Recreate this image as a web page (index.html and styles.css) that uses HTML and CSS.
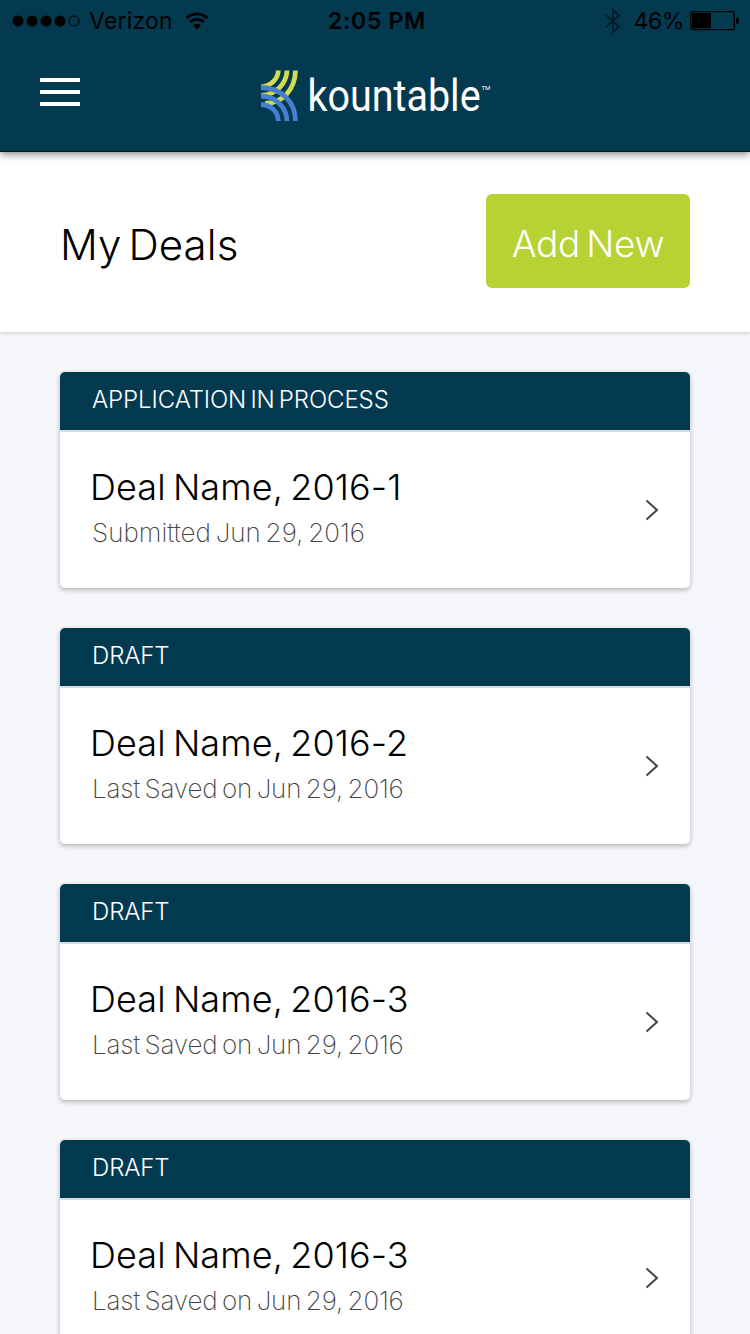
FILE: index.html
```html
<!DOCTYPE html>
<html lang="en">

<head>
	<meta charset="UTF-8">
	<meta name="viewport" content="width=device-width, initial-scale=1.0">

	<title>My Deals</title>

	<link rel="stylesheet" href="styles.css">
</head>

<body>
	<header class="header">
		<div class="status-bar">
			<div class="status-left">
				<svg class="signal" width="68" height="12" viewBox="0 0 68 12">
					<circle cx="6" cy="6" r="5.5" />
					<circle cx="20" cy="6" r="5.5" />
					<circle cx="34" cy="6" r="5.5" />
					<circle cx="48" cy="6" r="5.5" />
					<circle cx="62" cy="6" r="5" fill="none" stroke="#000" stroke-width="1" />
				</svg>
				<span class="carrier">Verizon</span>
				<svg class="wifi" width="24" height="18" viewBox="0 0 24 18">
					<path d="M1.5 6a15.3 15.3 0 0 1 21 0M5.2 10.2a9.8 9.8 0 0 1 13.6 0" fill="none" stroke="#000" stroke-width="2.8" />
					<path d="M8 13.4a5.8 5.8 0 0 1 8 0L12 17.6z" />
				</svg>
			</div>
			<span class="time">2:05 PM</span>
			<div class="status-right">
				<svg class="bluetooth" width="16" height="26" viewBox="0 0 16 26">
					<path d="M1 7l13 11.5-6 5.5V2l6 5.5L1 19" fill="none" stroke="#000" stroke-width="1.8" />
				</svg>
				<span class="percent">46%</span>
				<svg class="battery" width="49" height="20" viewBox="0 0 49 20">
					<rect x=".7" y=".7" width="43.6" height="18" rx="2" fill="none" stroke="#000" stroke-width="1.2" />
					<rect x="2" y="2" width="19" height="15.4" />
					<path d="M46 6.5q3 0 3 3.2t-3 3.2z" />
				</svg>
			</div>
		</div>
		<div class="nav-bar">
			<button class="menu-btn" aria-label="Menu">
				<span></span>
				<span></span>
				<span></span>
			</button>
			<svg class="logo" width="240" height="70" viewBox="0 -6 240 70">
				<g fill="none" stroke-width="4.8">
					<g stroke="#d0dc52">
						<path d="M17.3 .5C17 8 11 16 0 17" />
						<path d="M26 .5C25.5 13 16 24.5 0 25.5" />
						<path d="M34.5 .5C34 19 22 33.5 4 33.5" />
					</g>
					<g stroke="#467fd0">
						<path d="M0 17.5C20 18 34.3 31 34.5 51" />
						<path d="M0 26C15 26.5 25.5 37 26 51" />
						<path d="M0 34.5C10 35 17 41.5 17.3 51" />
					</g>
				</g>
				<text class="logo-name" transform="translate(46.5 40.5) scale(.877 1)">kountable</text>
				<text class="logo-tm" x="220.5" y="20">TM</text>
			</svg>
		</div>
	</header>

	<section class="title-bar">
		<h1>My Deals</h1>
		<button class="add-btn">Add New</button>
	</section>

	<main class="deals">
		<article class="deal">
			<div class="deal-status">APPLICATION IN PROCESS</div>
			<div class="deal-body">
				<div>
					<h2>Deal Name, 2016-1</h2>
					<p class="submitted">Submitted Jun 29, 2016</p>
				</div>
				<svg class="arrow" width="14" height="22" viewBox="0 0 14 22"><path d="M1.5 1.5l10.5 9.5-10.5 9.5" /></svg>
			</div>
		</article>
		<article class="deal">
			<div class="deal-status">DRAFT</div>
			<div class="deal-body">
				<div>
					<h2>Deal Name, 2016-2</h2>
					<p>Last Saved on Jun 29, 2016</p>
				</div>
				<svg class="arrow" width="14" height="22" viewBox="0 0 14 22"><path d="M1.5 1.5l10.5 9.5-10.5 9.5" /></svg>
			</div>
		</article>
		<article class="deal">
			<div class="deal-status">DRAFT</div>
			<div class="deal-body">
				<div>
					<h2>Deal Name, 2016-3</h2>
					<p>Last Saved on Jun 29, 2016</p>
				</div>
				<svg class="arrow" width="14" height="22" viewBox="0 0 14 22"><path d="M1.5 1.5l10.5 9.5-10.5 9.5" /></svg>
			</div>
		</article>
		<article class="deal">
			<div class="deal-status">DRAFT</div>
			<div class="deal-body">
				<div>
					<h2>Deal Name, 2016-3</h2>
					<p>Last Saved on Jun 29, 2016</p>
				</div>
				<svg class="arrow" width="14" height="22" viewBox="0 0 14 22"><path d="M1.5 1.5l10.5 9.5-10.5 9.5" /></svg>
			</div>
		</article>
	</main>
</body>

</html>
```
FILE: styles.css
```css
* {
	box-sizing: border-box;
}

body {
	background: #f5f6fa;
	margin: 0;
	height: 1334px;
	overflow: hidden;
	font-family: Inter, "Liberation Sans", sans-serif;
	font-weight: 300;
	color: #000;
}

h1, h2, p {
	margin: 0;
	font-weight: 300;
	white-space: nowrap;
}

button {
	border: 0;
	padding: 0;
	font-family: inherit;
	cursor: pointer;
}

/* header */

.header {
	position: relative;
	height: 152px;
	background: #043a50;
	border-bottom: 1px solid #001820;
	box-shadow: 0 2px 8px rgba(0, 0, 0, 0.5);
}

.status-bar {
	display: grid;
	grid-template-columns: 1fr auto 1fr;
	align-items: center;
	height: 41px;
	padding: 0 11px 0 12px;
	font-size: 23px;
	font-weight: 400;
}

.status-left,
.status-right {
	display: flex;
	align-items: center;
}

.status-right {
	justify-content: flex-end;
}

.carrier {
	margin: 0 12px 0 9px;
	letter-spacing: 0.2px;
}

.time {
	padding-left: 3px;
	font-weight: 600;
	letter-spacing: 0.7px;
}

.bluetooth {
	margin-right: 12px;
	opacity: 0.5;
}

.percent {
	margin-right: 6px;
	letter-spacing: -0.4px;
}

.nav-bar {
	display: flex;
	align-items: flex-start;
	padding: 23px 40px 0;
}

.menu-btn {
	display: flex;
	flex-direction: column;
	gap: 8px;
	width: 40px;
	margin-top: 14px;
	background: none;
}

.menu-btn span {
	height: 4px;
	width: 40px;
	background: #fff;
}

.logo {
	flex: none;
	margin-left: 181px;
}

.logo-name {
	font-family: Roboto, sans-serif;
	font-size: 45px;
	font-weight: 400;
	fill: #fff;
}

.logo-tm {
	font-family: Roboto, sans-serif;
	font-size: 6px;
	font-weight: 400;
	fill: #fff;
}

/* page title */

.title-bar {
	display: flex;
	justify-content: space-between;
	height: 180px;
	padding: 42px 60px 0;
	background: #fff;
	box-shadow: 0 1px 4px rgba(0, 0, 0, 0.18);
}

.title-bar h1 {
	font-size: 42px;
	line-height: 102px;
	letter-spacing: 0.1px;
	word-spacing: -5px;
}

.add-btn {
	width: 204px;
	height: 94px;
	padding-top: 5px;
	border-radius: 6px;
	background: #b7d233;
	color: #fff;
	font-size: 37px;
	font-weight: 300;
	letter-spacing: -0.3px;
	word-spacing: -4px;
}

/* deals */

.deals {
	display: flex;
	flex-direction: column;
	gap: 40px;
	padding: 40px 60px 0;
}

.deal {
	flex: none;
	height: 216px;
	border-radius: 5px;
	background: #fff;
	box-shadow: 0 2px 5px rgba(0, 0, 0, 0.27);
	overflow: hidden;
}

.deal-status {
	height: 60px;
	padding-left: 32px;
	border-bottom: 2px solid #d5dde3;
	background: #043a50;
	color: #fff;
	font-size: 24px;
	line-height: 55px;
	letter-spacing: -0.1px;
	word-spacing: -2.5px;
}

.deal-body {
	display: flex;
	justify-content: space-between;
	align-items: center;
	height: 156px;
	padding: 0 31px 0 30px;
}

.deal h2 {
	font-size: 36px;
	line-height: 44px;
	letter-spacing: 0.1px;
	word-spacing: -3px;
}

.deal p {
	padding: 3px 0 1px 2px;
	color: #444;
	font-size: 26px;
	font-weight: 250;
	letter-spacing: -0.2px;
	line-height: 42px;
	word-spacing: -2.5px;
}

.deal p.submitted {
	letter-spacing: 0;
}

.arrow {
	fill: none;
	stroke: #444;
	stroke-width: 2;
}
```
